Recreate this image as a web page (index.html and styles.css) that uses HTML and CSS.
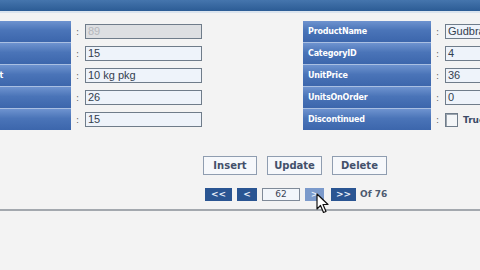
FILE: index.html
```html
<!DOCTYPE html>
<html>
<head>
<meta charset="utf-8">
<link rel="stylesheet" href="styles.css">
</head>
<body>
<div class="page">
  <div class="topbar"></div>
  <div class="forms">
    <div class="form form-left">
      <div class="label">ProductID</div><div class="colon">:</div><div class="field"><span class="input disabled">89</span></div>
      <div class="label">SupplierID</div><div class="colon">:</div><div class="field"><span class="input">15</span></div>
      <div class="label">QuantityPerUnit</div><div class="colon">:</div><div class="field"><span class="input">10 kg pkg</span></div>
      <div class="label">UnitsInStock</div><div class="colon">:</div><div class="field"><span class="input">26</span></div>
      <div class="label">ReorderLevel</div><div class="colon">:</div><div class="field"><span class="input">15</span></div>
    </div>
    <div class="form form-right">
      <div class="label">ProductName</div><div class="colon">:</div><div class="field"><span class="input">Gudbrandsdalsost</span></div>
      <div class="label">CategoryID</div><div class="colon">:</div><div class="field"><span class="input">4</span></div>
      <div class="label">UnitPrice</div><div class="colon">:</div><div class="field"><span class="input">36</span></div>
      <div class="label">UnitsOnOrder</div><div class="colon">:</div><div class="field"><span class="input">0</span></div>
      <div class="label">Discontinued</div><div class="colon">:</div><div class="field"><span class="check"></span><span class="checktext">True</span></div>
    </div>
  </div>
  <div class="actions">
    <span class="btn">Insert</span>
    <span class="btn">Update</span>
    <span class="btn">Delete</span>
  </div>
  <div class="pager">
    <span class="pbtn wide">&lt;&lt;</span>
    <span class="pbtn">&lt;</span>
    <span class="pinput">62</span>
    <span class="pbtn hover">&gt;
      <svg class="cursor" width="13" height="22" viewBox="0 0 13 22"><path d="M1 1 L1 16 L4.5 12.5 L7.5 19.5 L10 18.5 L7 11.5 L12 11.5 Z" fill="#fff" stroke="#111" stroke-width="1.2" stroke-linejoin="round"/></svg>
    </span>
    <span class="pbtn wide2">&gt;&gt;</span>
    <span class="of">Of 76</span>
  </div>
  <div class="divider"></div>
</div>
</body>
</html>
```
FILE: styles.css
```css
html, body {
  margin: 0;
  padding: 0;
}
body {
  width: 480px;
  height: 270px;
  overflow: hidden;
  background: #f3f3f3;
  font-family: "DejaVu Sans", Verdana, sans-serif;
}
.page {
  display: flex;
  flex-direction: column;
}
.topbar {
  height: 11px;
  background: linear-gradient(#4575ad, #2c5c95);
  border-bottom: 2px solid #dbe4ee;
}
.forms {
  display: flex;
  margin-top: 8px;
  margin-left: -72px;
}
.form {
  display: grid;
  row-gap: 1px;
  grid-auto-rows: 21px;
}
.form-left {
  grid-template-columns: 143px 14px 117px;
  background: linear-gradient(90deg, #a9bfe2 143px, #f3f3f3 143px);
}
.form-right {
  grid-template-columns: 128px 14px 110px;
  margin-left: 101px;
  background: linear-gradient(90deg, #a9bfe2 128px, #f3f3f3 128px);
}
.label {
  background: linear-gradient(#6e93cf 0%, #4a74b8 45%, #3c66ac 100%);
  color: #fff;
  font-family: "DejaVu Sans", sans-serif;
  font-weight: bold;
  font-size: 8px;
  letter-spacing: -0.2px;
  display: flex;
  align-items: center;
  padding-left: 5px;
  white-space: nowrap;
  overflow: hidden;
}
.colon {
  background: #f3f3f3;
  color: #666;
  font-size: 9px;
  display: flex;
  align-items: center;
  padding-left: 5px;
}
.field {
  background: #f3f3f3;
  display: flex;
  align-items: center;
}
.input {
  box-sizing: border-box;
  width: 100%;
  height: 15px;
  border: 1.5px solid #6f7c8a;
  background: #eef3fa;
  color: #33404f;
  font-family: "Liberation Sans", Arial, sans-serif;
  font-size: 11px;
  line-height: 12px;
  padding-left: 2px;
  white-space: nowrap;
  overflow: hidden;
}
.input.disabled {
  background: #dddfe2;
  color: #b5b8bd;
}
.check {
  width: 13px;
  height: 14px;
  border: 1.5px solid #6f7c8a;
  background: #f4f6f8;
  box-shadow: inset 1px 1px 0 #9aa3ad;
  box-sizing: border-box;
  margin-right: 5px;
}
.checktext {
  font-weight: bold;
  font-size: 9px;
  color: #3a4a66;
}
.actions {
  display: flex;
  gap: 10px;
  margin-top: 26px;
  margin-left: 203px;
}
.btn {
  box-sizing: border-box;
  height: 19px;
  border: 1.5px solid #8f9db0;
  background: #f6f8fb;
  color: #43506a;
  font-size: 10px;
  font-weight: bold;
  display: flex;
  align-items: center;
  justify-content: center;
}
.btn:nth-child(1) { width: 54px; }
.btn:nth-child(2) { width: 55px; }
.btn:nth-child(3) { width: 55px; }
.pager {
  display: flex;
  align-items: center;
  gap: 5px;
  margin-top: 12px;
  margin-left: 205px;
  height: 14px;
}
.pbtn {
  position: relative;
  box-sizing: border-box;
  height: 13px;
  width: 20px;
  background: #2a5592;
  color: #e8effa;
  font-size: 9px;
  font-weight: bold;
  display: flex;
  align-items: center;
  justify-content: center;
}
.pbtn.wide { width: 27px; }
.pbtn.wide2 { width: 25px; margin-left: 2px; }
.pbtn.hover { background: #7b9acb; width: 19px; }
.pinput {
  box-sizing: border-box;
  width: 38px;
  height: 13px;
  border: 1.5px solid #7f8a98;
  background: #f2f6fb;
  color: #3a4455;
  font-size: 9px;
  display: flex;
  align-items: center;
  justify-content: center;
}
.of {
  color: #4d5a70;
  font-size: 9px;
  font-weight: bold;
  margin-left: -1px;
}
.cursor {
  position: absolute;
  left: 11px;
  top: 5px;
}
.divider {
  margin-top: 8px;
  height: 2px;
  background: #a3a8ae;
}
```
